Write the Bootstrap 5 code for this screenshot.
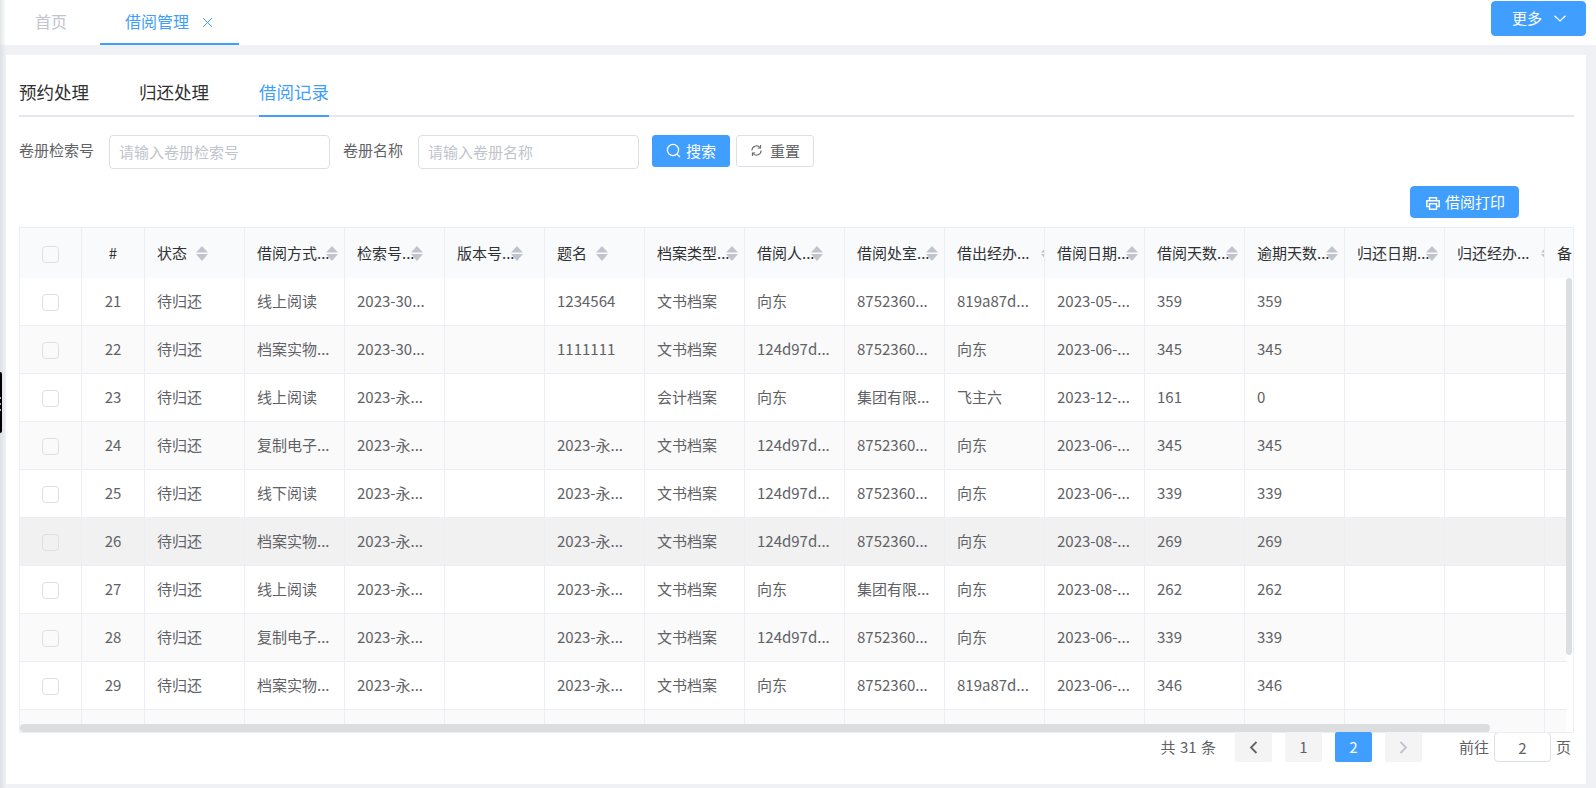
<!DOCTYPE html>
<html lang="zh">
<head>
<meta charset="utf-8">
<title>借阅管理</title>
<link href="https://cdn.jsdelivr.net/npm/bootstrap@5.3.0/dist/css/bootstrap.min.css" rel="stylesheet">
<style>
html,body{height:788px;overflow:hidden}
body{background:#f0f1f5;font-family:"Noto Sans CJK SC","Liberation Sans",sans-serif;font-size:15px;color:#606266;position:relative}
.edge-shade{position:absolute;left:0;top:0;width:6px;height:788px;background:linear-gradient(90deg,#dcdfe3,#f0f1f5);pointer-events:none;z-index:3}
.edge-shade-top{height:45px;background:linear-gradient(90deg,#e2e4e7,#fff)}
.side-handle{position:absolute;left:0;top:372px;width:2px;height:61px;border-radius:0 2px 2px 0;z-index:4;background:linear-gradient(#aaa,#aaa) 0 25px/1px 2px no-repeat,linear-gradient(#aaa,#aaa) 0 31px/1px 2px no-repeat,linear-gradient(#aaa,#aaa) 0 37px/1px 2px no-repeat,#000}
.topbar{height:45px;background:#fff}
.page-tab{height:45px;line-height:42px;padding:0 25px;font-size:16px;color:#c0c4cc;border-bottom:2px solid transparent;text-decoration:none}
.page-tab-first{margin-left:10px;margin-right:8px}
.page-tab-on{color:#409eff;border-bottom-color:#409eff;padding:0 26px 2px 25px}
.tab-name{margin-right:5px}
.tab-close{margin-top:4px}
.more-btn{width:95px;height:35px;margin:1px 10px 0 0;padding:0 0 0 20px;background:#409eff;border-color:#409eff;border-radius:4px;color:#fff;font-size:15px}
.sheet{background:#fff;margin:10px 10px 0 6px;height:729px;padding:0 12px 0 13px}
.sub-tabs{height:62px;border-bottom:2px solid #e4e7ed;align-items:flex-end;gap:50px}
.sub-link{padding:0;height:45px;line-height:40px;font-size:17.5px;color:#303133;margin-bottom:-2px;border-bottom:2px solid transparent}
.sub-on{color:#409eff;border-bottom-color:#409eff}
.filter-row{margin-top:18px;height:34px}
.filter-label{font-size:15px;color:#606266;white-space:nowrap;padding-bottom:3px}
.label-first{margin-right:15px}
.label-second{margin:0 15px 0 13px}
.filter-input{width:221px;height:34px;padding:0 9px 2px;border:1px solid #dcdfe6;border-radius:4px;font-size:15px;color:#606266}
.filter-input::placeholder{color:#c0c4cc}
.act-btn{height:32px;width:78px;padding:0 0 2px;font-size:15px;border-radius:3px;line-height:1;align-self:flex-start}
.act-primary{background:#409eff;border:1px solid #409eff;color:#fff;margin-left:13px;gap:5px}
.act-plain{background:#fff;border:1px solid #dcdfe6;color:#606266;margin-left:6px;gap:7px}
.print-row{margin-top:17px;height:32px;padding-right:55px}
.print-btn{width:109px;height:32px;padding:0 0 0 2px;background:#409eff;border:1px solid #409eff;border-radius:4px;color:#fff;font-size:15px;gap:5px}
.print-icon{margin-top:2px}
.grid-box{position:relative;margin-top:9px;height:506px;border:1px solid #ebeef5;overflow:hidden}
.grid-table{table-layout:fixed;width:1625px;margin:0;border-collapse:separate;border-spacing:0;font-size:15px;color:#606266}
.grid-table th,.grid-table td{padding:0 0 0 12px;border:0;border-right:1px solid #ebeef5;border-bottom:1px solid #ebeef5;white-space:nowrap;overflow:hidden;vertical-align:middle;box-shadow:none;background:transparent;color:inherit}
.grid-table th{height:50px;background:#f9fafb;font-weight:400;color:#303133;border-bottom:0}
.grid-table td{height:48px}
.grid-table tr.zebra td{background:#fafafa}
.grid-table tr.hovered td{background:#f1f1f2}
.grid-table .cell-check,.grid-table .cell-num{padding:0;text-align:center}
.tick{width:17px;height:17px;margin:2px auto 0;border:1px solid #dcdfe6;border-radius:2px;background-color:transparent;display:block}
.head-wrap{display:inline-flex;align-items:center}
.head-txt{display:inline-block}
.wd-a{width:39px}.wd-b{width:54px}.wd-c{width:69px}.wd-d{width:84px}
.sorter{display:block;width:12px;height:15px;flex:none}
.vbar-mask{position:absolute;right:0;top:50px;bottom:0;width:7px;background:#fff}
.vbar{position:absolute;right:1px;top:50px;width:6px;height:377px;border-radius:3px;background:#dddee0}
.hbar{position:absolute;left:0;bottom:0;width:1470px;height:8px;border-radius:4px;background:#dcdddf}
.pager-row{height:30px;margin-top:-1px;padding-right:3px}
.pager-total{margin-right:19px;font-size:15px;white-space:nowrap;word-spacing:1px}
.pager-list{margin:0;gap:13px}
.pager-list .page-item .pager-cell{width:37px;height:30px;padding:0;margin:0;border:0;border-radius:2px;background:#f4f4f5;color:#606266;font-size:15px;display:flex;align-items:center;justify-content:center}
.pager-list .page-item.active .pager-cell{background:#409eff;color:#fff}
.pager-go{margin-left:37px;white-space:nowrap}
.pager-input{width:57px;height:30px;padding:0;margin:0 5px;border:1px solid #dcdfe6;border-radius:4px;text-align:center;font-size:15px;color:#606266}
</style>
</head>
<body>
<div class="edge-shade"></div>
<div class="edge-shade edge-shade-top"></div>
<div class="side-handle"></div>

<header class="topbar d-flex justify-content-between align-items-start">
  <nav class="nav">
    <a class="page-tab page-tab-first" href="#">首页</a>
    <a class="page-tab page-tab-on d-flex align-items-center gap-2" href="#"><span class="tab-name">借阅管理</span>
      <svg class="tab-close" width="11" height="11" viewBox="0 0 11 11" fill="none" stroke="#409eff" stroke-width="1"><path d="M1 1l9 9M10 1l-9 9"/></svg></a>
  </nav>
  <button class="btn more-btn d-flex align-items-center gap-2" type="button"><span class="me-1">更多</span>
    <svg width="12" height="7" viewBox="0 0 12 7" fill="none" stroke="#fff" stroke-width="1.2"><path d="M.5.8L6 6l5.5-5.2"/></svg></button>
</header>

<main class="sheet">
  <nav class="nav sub-tabs">
    <a class="nav-link sub-link" href="#">预约处理</a>
    <a class="nav-link sub-link" href="#">归还处理</a>
    <a class="nav-link sub-link sub-on" href="#">借阅记录</a>
  </nav>

  <form class="filter-row d-flex align-items-center">
    <label class="filter-label label-first">卷册检索号</label>
    <input class="form-control filter-input" placeholder="请输入卷册检索号">
    <label class="filter-label label-second">卷册名称</label>
    <input class="form-control filter-input" placeholder="请输入卷册名称">
    <button class="btn act-btn act-primary d-flex align-items-center justify-content-center" type="button">
      <svg width="15" height="15" viewBox="0 0 15 15" fill="none" stroke="#fff" stroke-width="1.3"><circle cx="7" cy="7" r="5.6"/><path d="M11.2 11.2l2.8 2.8"/></svg><span>搜索</span></button>
    <button class="btn act-btn act-plain d-flex align-items-center justify-content-center" type="button">
      <svg width="13" height="13" viewBox="0 0 14 14" fill="none" stroke="#606266" stroke-width="1.1"><path d="M2 7a5 5 0 0 1 8.8-3.2M12 7a5 5 0 0 1-8.8 3.2"/><path d="M11.4 1.2v3h-3M2.6 12.8v-3h3"/></svg><span>重置</span></button>
  </form>

  <div class="print-row d-flex justify-content-end">
    <button class="btn print-btn d-flex align-items-center justify-content-center" type="button">
      <svg class="print-icon" width="14" height="13" viewBox="0 0 14 13" fill="none" stroke="#fff" stroke-width="1.4"><path d="M3.5 3.5V.8h7v2.7M3 9.5H.8V3.7h12.4v5.8H11"/><path d="M3.5 6.8h7v5.4h-7z"/></svg><span>借阅打印</span></button>
  </div>

  <div class="grid-box">
    <table class="table grid-table">
      <colgroup><col style="width:62px"><col style="width:63px"><col span="16" style="width:100px"></colgroup>
      <thead><tr>
        <th class="cell-check"><input class="form-check-input tick" type="checkbox"></th>
        <th class="cell-num">#</th>
        <th><span class="head-wrap"><span class="head-txt wd-a">状态</span><svg class="sorter" viewBox="0 0 12 15" fill="#c0c4cc"><path d="M6 0l6 6.5H0zM0 8h12l-6 7z"/></svg></span></th>
        <th><span class="head-wrap"><span class="head-txt wd-c">借阅方式...</span><svg class="sorter" viewBox="0 0 12 15" fill="#c0c4cc"><path d="M6 0l6 6.5H0zM0 8h12l-6 7z"/></svg></span></th>
        <th><span class="head-wrap"><span class="head-txt wd-b">检索号...</span><svg class="sorter" viewBox="0 0 12 15" fill="#c0c4cc"><path d="M6 0l6 6.5H0zM0 8h12l-6 7z"/></svg></span></th>
        <th><span class="head-wrap"><span class="head-txt wd-b">版本号...</span><svg class="sorter" viewBox="0 0 12 15" fill="#c0c4cc"><path d="M6 0l6 6.5H0zM0 8h12l-6 7z"/></svg></span></th>
        <th><span class="head-wrap"><span class="head-txt wd-a">题名</span><svg class="sorter" viewBox="0 0 12 15" fill="#c0c4cc"><path d="M6 0l6 6.5H0zM0 8h12l-6 7z"/></svg></span></th>
        <th><span class="head-wrap"><span class="head-txt wd-c">档案类型...</span><svg class="sorter" viewBox="0 0 12 15" fill="#c0c4cc"><path d="M6 0l6 6.5H0zM0 8h12l-6 7z"/></svg></span></th>
        <th><span class="head-wrap"><span class="head-txt wd-b">借阅人...</span><svg class="sorter" viewBox="0 0 12 15" fill="#c0c4cc"><path d="M6 0l6 6.5H0zM0 8h12l-6 7z"/></svg></span></th>
        <th><span class="head-wrap"><span class="head-txt wd-c">借阅处室...</span><svg class="sorter" viewBox="0 0 12 15" fill="#c0c4cc"><path d="M6 0l6 6.5H0zM0 8h12l-6 7z"/></svg></span></th>
        <th><span class="head-wrap"><span class="head-txt wd-d">借出经办...</span><svg class="sorter" viewBox="0 0 12 15" fill="#c0c4cc"><path d="M6 0l6 6.5H0zM0 8h12l-6 7z"/></svg></span></th>
        <th><span class="head-wrap"><span class="head-txt wd-c">借阅日期...</span><svg class="sorter" viewBox="0 0 12 15" fill="#c0c4cc"><path d="M6 0l6 6.5H0zM0 8h12l-6 7z"/></svg></span></th>
        <th><span class="head-wrap"><span class="head-txt wd-c">借阅天数...</span><svg class="sorter" viewBox="0 0 12 15" fill="#c0c4cc"><path d="M6 0l6 6.5H0zM0 8h12l-6 7z"/></svg></span></th>
        <th><span class="head-wrap"><span class="head-txt wd-c">逾期天数...</span><svg class="sorter" viewBox="0 0 12 15" fill="#c0c4cc"><path d="M6 0l6 6.5H0zM0 8h12l-6 7z"/></svg></span></th>
        <th><span class="head-wrap"><span class="head-txt wd-c">归还日期...</span><svg class="sorter" viewBox="0 0 12 15" fill="#c0c4cc"><path d="M6 0l6 6.5H0zM0 8h12l-6 7z"/></svg></span></th>
        <th><span class="head-wrap"><span class="head-txt wd-d">归还经办...</span><svg class="sorter" viewBox="0 0 12 15" fill="#c0c4cc"><path d="M6 0l6 6.5H0zM0 8h12l-6 7z"/></svg></span></th>
        <th>备</th><th></th>
      </tr></thead>
      <tbody>
        <tr><td class="cell-check"><input class="form-check-input tick" type="checkbox"></td><td class="cell-num">21</td><td>待归还</td><td>线上阅读</td><td>2023-30...</td><td></td><td>1234564</td><td>文书档案</td><td>向东</td><td>8752360...</td><td>819a87d...</td><td>2023-05-...</td><td>359</td><td>359</td><td></td><td></td><td></td><td></td></tr>
        <tr class="zebra"><td class="cell-check"><input class="form-check-input tick" type="checkbox"></td><td class="cell-num">22</td><td>待归还</td><td>档案实物...</td><td>2023-30...</td><td></td><td>1111111</td><td>文书档案</td><td>124d97d...</td><td>8752360...</td><td>向东</td><td>2023-06-...</td><td>345</td><td>345</td><td></td><td></td><td></td><td></td></tr>
        <tr><td class="cell-check"><input class="form-check-input tick" type="checkbox"></td><td class="cell-num">23</td><td>待归还</td><td>线上阅读</td><td>2023-永...</td><td></td><td></td><td>会计档案</td><td>向东</td><td>集团有限...</td><td>飞主六</td><td>2023-12-...</td><td>161</td><td>0</td><td></td><td></td><td></td><td></td></tr>
        <tr class="zebra"><td class="cell-check"><input class="form-check-input tick" type="checkbox"></td><td class="cell-num">24</td><td>待归还</td><td>复制电子...</td><td>2023-永...</td><td></td><td>2023-永...</td><td>文书档案</td><td>124d97d...</td><td>8752360...</td><td>向东</td><td>2023-06-...</td><td>345</td><td>345</td><td></td><td></td><td></td><td></td></tr>
        <tr><td class="cell-check"><input class="form-check-input tick" type="checkbox"></td><td class="cell-num">25</td><td>待归还</td><td>线下阅读</td><td>2023-永...</td><td></td><td>2023-永...</td><td>文书档案</td><td>124d97d...</td><td>8752360...</td><td>向东</td><td>2023-06-...</td><td>339</td><td>339</td><td></td><td></td><td></td><td></td></tr>
        <tr class="hovered"><td class="cell-check"><input class="form-check-input tick" type="checkbox"></td><td class="cell-num">26</td><td>待归还</td><td>档案实物...</td><td>2023-永...</td><td></td><td>2023-永...</td><td>文书档案</td><td>124d97d...</td><td>8752360...</td><td>向东</td><td>2023-08-...</td><td>269</td><td>269</td><td></td><td></td><td></td><td></td></tr>
        <tr><td class="cell-check"><input class="form-check-input tick" type="checkbox"></td><td class="cell-num">27</td><td>待归还</td><td>线上阅读</td><td>2023-永...</td><td></td><td>2023-永...</td><td>文书档案</td><td>向东</td><td>集团有限...</td><td>向东</td><td>2023-08-...</td><td>262</td><td>262</td><td></td><td></td><td></td><td></td></tr>
        <tr class="zebra"><td class="cell-check"><input class="form-check-input tick" type="checkbox"></td><td class="cell-num">28</td><td>待归还</td><td>复制电子...</td><td>2023-永...</td><td></td><td>2023-永...</td><td>文书档案</td><td>124d97d...</td><td>8752360...</td><td>向东</td><td>2023-06-...</td><td>339</td><td>339</td><td></td><td></td><td></td><td></td></tr>
        <tr><td class="cell-check"><input class="form-check-input tick" type="checkbox"></td><td class="cell-num">29</td><td>待归还</td><td>档案实物...</td><td>2023-永...</td><td></td><td>2023-永...</td><td>文书档案</td><td>向东</td><td>8752360...</td><td>819a87d...</td><td>2023-06-...</td><td>346</td><td>346</td><td></td><td></td><td></td><td></td></tr>
        <tr class="zebra"><td class="cell-check"></td><td class="cell-num"></td><td></td><td></td><td></td><td></td><td></td><td></td><td></td><td></td><td></td><td></td><td></td><td></td><td></td><td></td><td></td><td></td></tr>
      </tbody>
    </table>
    <div class="vbar-mask"></div>
    <div class="vbar"></div>
    <div class="hbar"></div>
  </div>

  <div class="pager-row d-flex justify-content-end align-items-center">
    <span class="pager-total">共 31 条</span>
    <ul class="pagination pager-list">
      <li class="page-item"><a class="page-link pager-cell" href="#" aria-label="上一页"><svg width="9" height="13" viewBox="0 0 9 13" fill="none" stroke="#606266" stroke-width="1.8"><path d="M7.5 1L2 6.5 7.5 12"/></svg></a></li>
      <li class="page-item"><a class="page-link pager-cell" href="#">1</a></li>
      <li class="page-item active"><a class="page-link pager-cell" href="#">2</a></li>
      <li class="page-item"><a class="page-link pager-cell" href="#" aria-label="下一页"><svg width="9" height="13" viewBox="0 0 9 13" fill="none" stroke="#c0c4cc" stroke-width="1.8"><path d="M1.5 1L7 6.5 1.5 12"/></svg></a></li>
    </ul>
    <span class="pager-go">前往</span>
    <input class="form-control pager-input" value="2">
    <span>页</span>
  </div>
</main>
</body>
</html>
